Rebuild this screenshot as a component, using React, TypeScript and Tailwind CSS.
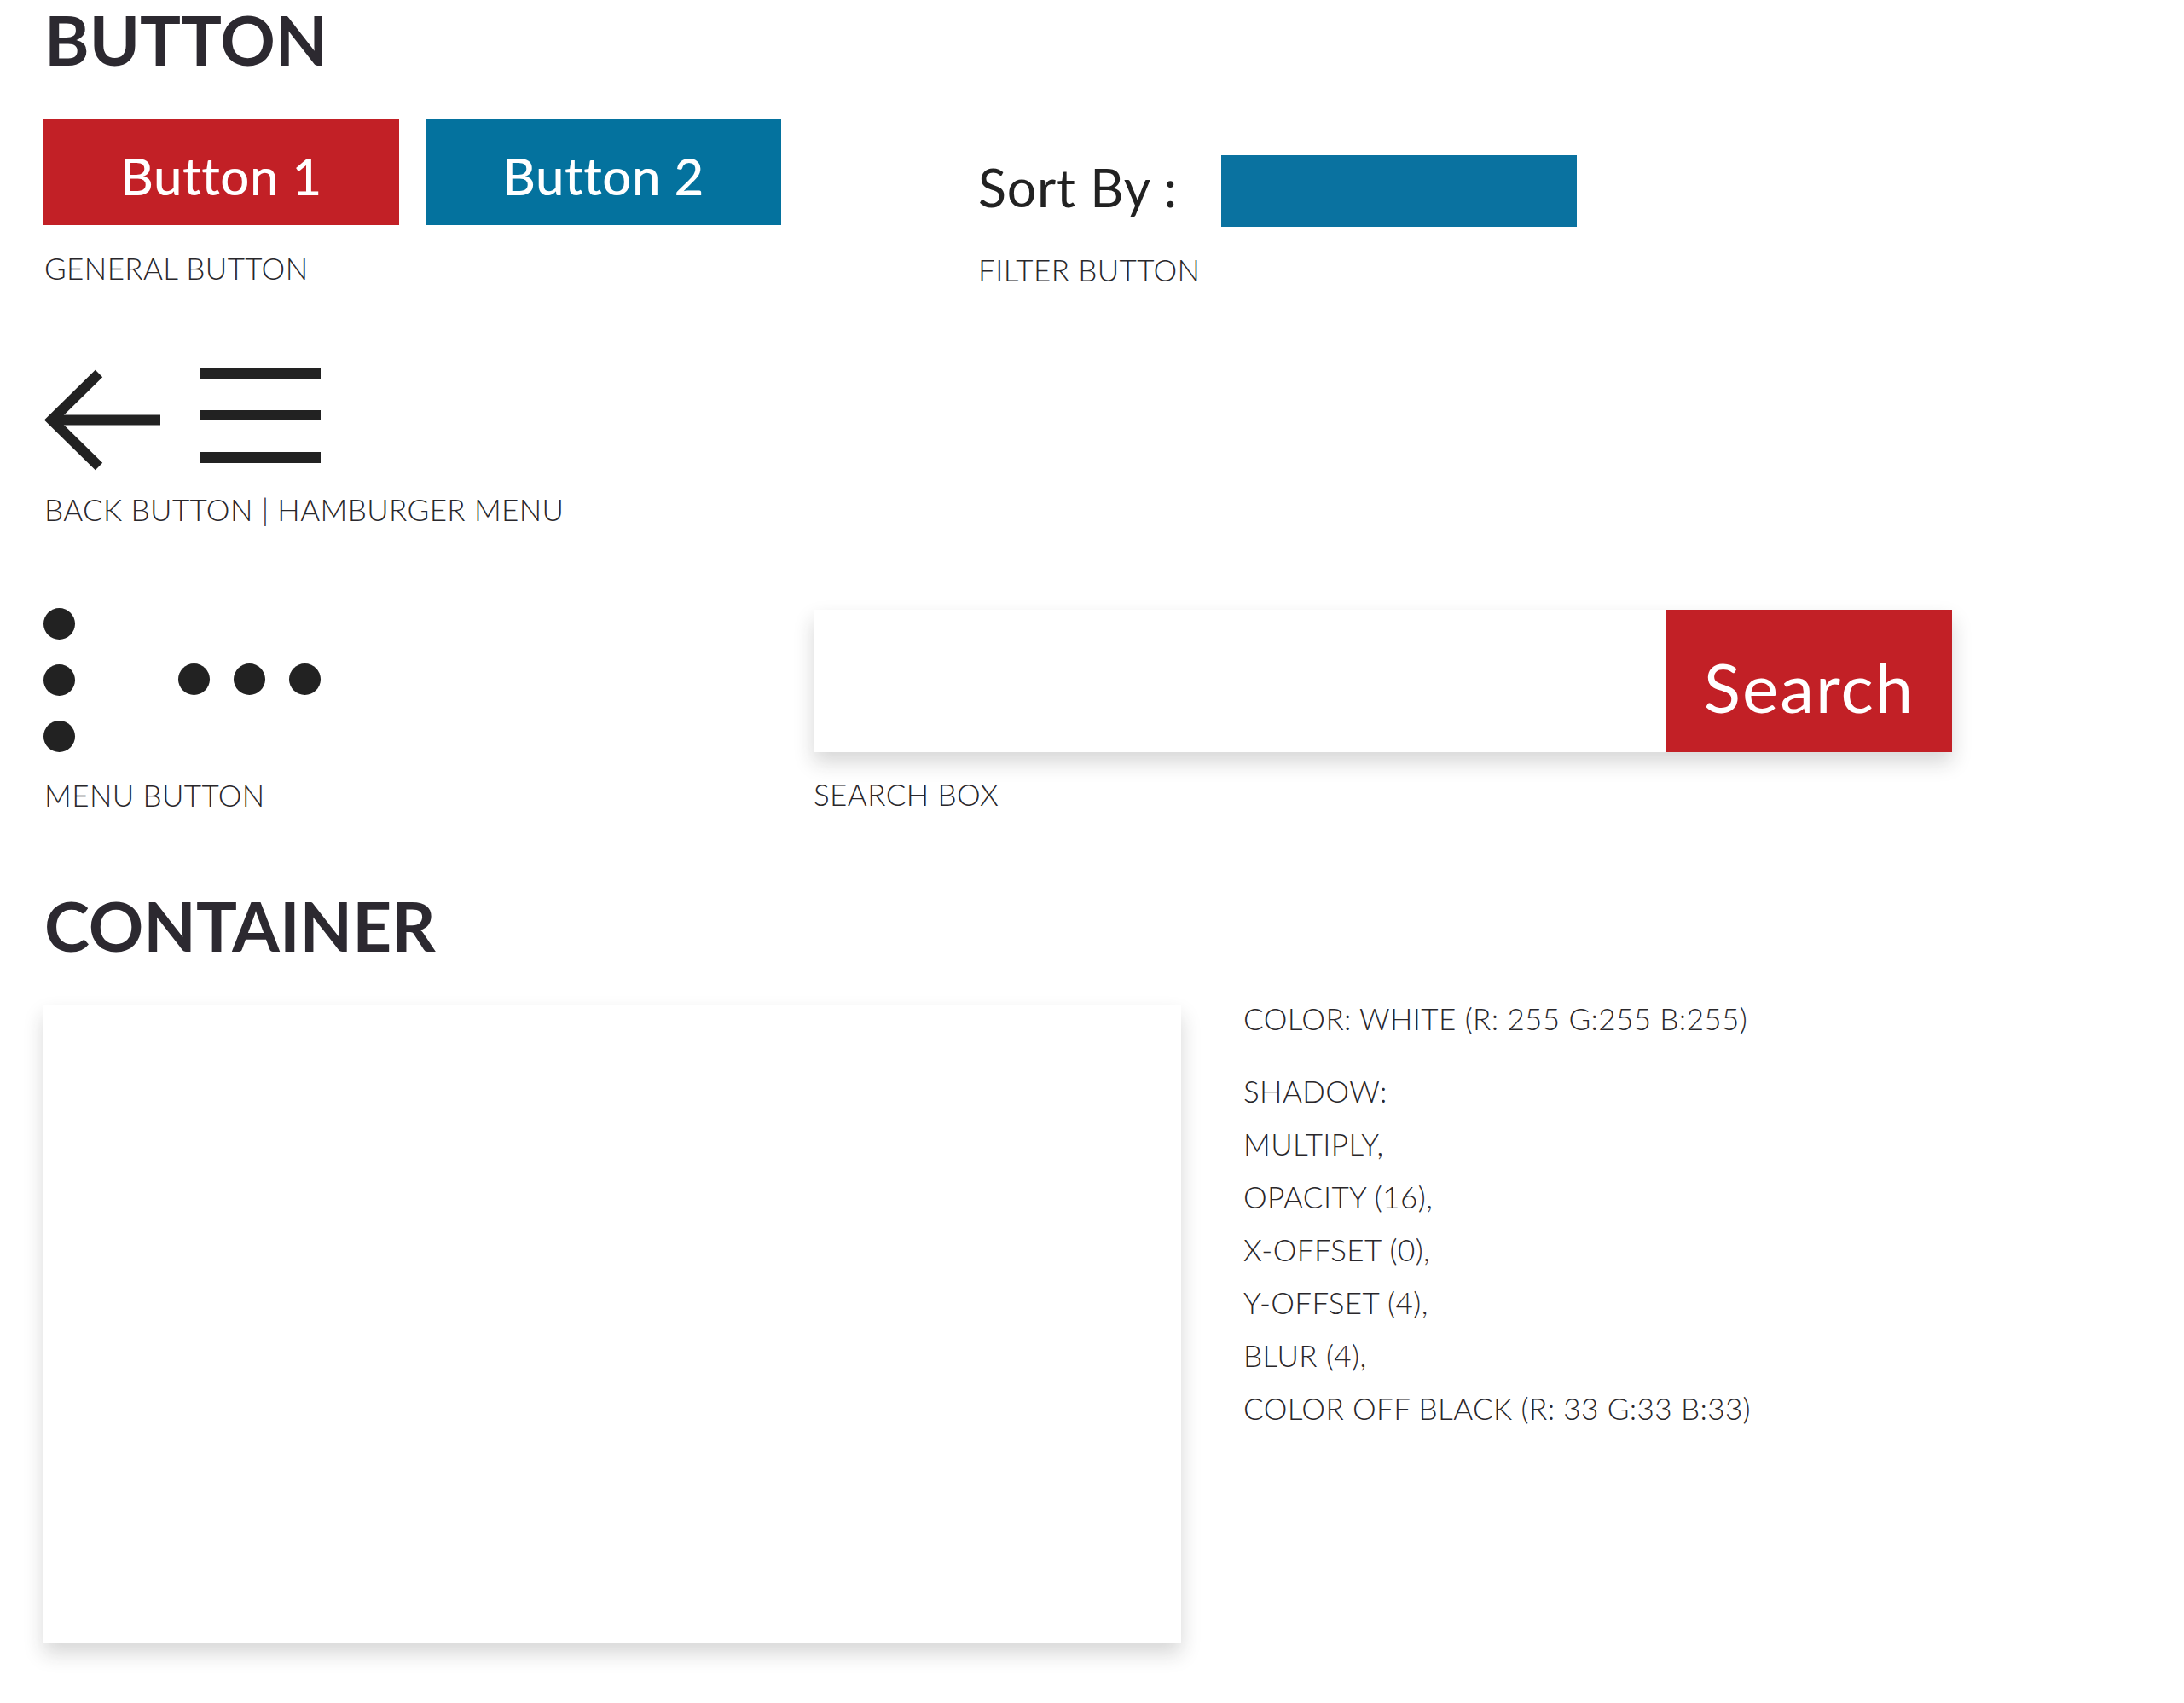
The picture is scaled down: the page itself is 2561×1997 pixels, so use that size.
import React from "react";

const label =
  "text-[35px] leading-none font-light text-[#29272b] tracking-[0.4px] whitespace-nowrap";

function BackArrow() {
  return (
    <svg width="136" height="121" viewBox="0 0 136 121" className="overflow-visible block">
      <polyline
        points="64,6 8.5,60.5 64,115"
        fill="none"
        stroke="#222222"
        strokeWidth="12"
        strokeLinejoin="miter"
        strokeMiterlimit="4"
      />
      <line x1="10" y1="60.5" x2="136" y2="60.5" stroke="#222222" strokeWidth="12" />
    </svg>
  );
}

function Hamburger() {
  return (
    <svg width="141" height="111" viewBox="0 0 141 111" className="block">
      <rect x="0" y="0" width="141" height="12" fill="#222222" />
      <rect x="0" y="49" width="141" height="12" fill="#222222" />
      <rect x="0" y="98" width="141" height="13" fill="#222222" />
    </svg>
  );
}

function Dot() {
  return <div className="w-[37px] h-[37px] rounded-full bg-[#222222]" />;
}

export default function App() {
  return (
    <div className="min-h-screen bg-white pl-[52px] pt-[6px] font-['Lato',sans-serif] text-[#29272b]">
      {/* BUTTON heading */}
      <h1 className="text-[80px] leading-none font-bold text-[#2c2930]">BUTTON</h1>

      {/* Buttons row */}
      <div className="flex mt-[53px]">
        <div className="w-[1095px] flex flex-col">
          <div className="flex gap-[31px] -ml-px">
            <div className="w-[417px] h-[125px] bg-[#c22026] flex items-center justify-center text-white text-[60px] leading-none font-medium tracking-[0.5px] pt-[8px]">
              Button 1
            </div>
            <div className="w-[417px] h-[125px] bg-[#04729e] flex items-center justify-center text-white text-[60px] leading-none font-medium tracking-[0.5px] pt-[8px]">
              Button 2
            </div>
          </div>
          <div className={label + " mt-[33px]"}>GENERAL BUTTON</div>
        </div>
        <div className="flex flex-col">
          <div className="flex items-start mt-[43px]">
            <div className="text-[61px] leading-none text-[#222222] mt-[7px] w-[285px] tracking-[0.8px] whitespace-pre">Sort By :</div>
            <div className="w-[417px] h-[84px] bg-[#0a72a0]" />
          </div>
          <div className={label + " mt-[33px]"}>FILTER BUTTON</div>
        </div>
      </div>

      {/* Back / hamburger */}
      <div className="flex items-start mt-[98px]">
        <BackArrow />
        <div className="ml-[47px]">
          <Hamburger />
        </div>
      </div>
      <div className={label + " mt-[27px]"}>BACK BUTTON | HAMBURGER MENU</div>

      {/* Menu + search */}
      <div className="flex mt-[98px]">
        <div className="w-[902px] flex flex-col">
          <div className="flex items-center -ml-px">
            <div className="flex flex-col gap-[29px]">
              <Dot />
              <Dot />
              <Dot />
            </div>
            <div className="flex gap-[28px] ml-[121px] mt-[-2px]">
              <Dot />
              <Dot />
              <Dot />
            </div>
          </div>
          <div className={label + " mt-[33px]"}>MENU BUTTON</div>
        </div>
        <div className="flex flex-col">
          <div className="mt-[2px] w-[1335px] h-[167px] bg-white flex shadow-[0_12px_22px_rgba(33,33,33,0.18)]">
            <div className="flex-1" />
            <div className="w-[335px] h-full bg-[#c22026] flex items-center justify-center text-white text-[80px] leading-none tracking-[2px] pt-[12px]">
              Search
            </div>
          </div>
          <div className={label + " mt-[32px]"}>SEARCH BOX</div>
        </div>
      </div>

      {/* CONTAINER */}
      <h2 className="text-[80px] leading-none font-bold text-[#2c2930] mt-[95px]">CONTAINER</h2>
      <div className="flex mt-[54px] pb-[70px]">
        <div className="w-[1334px] h-[748px] bg-white -ml-px shadow-[0_12px_22px_rgba(33,33,33,0.18)]" />
        <div className="ml-[73px] mt-[-2px] flex flex-col">
          <div className={label}>COLOR: WHITE (R: 255 G:255 B:255)</div>
          <div className="flex flex-col gap-[27px] mt-[50px]">
            <div className={label}>SHADOW:</div>
            <div className={label}>MULTIPLY,</div>
            <div className={label}>OPACITY (16),</div>
            <div className={label}>X-OFFSET (0),</div>
            <div className={label}>Y-OFFSET (4),</div>
            <div className={label}>BLUR (4),</div>
            <div className={label}>COLOR OFF BLACK (R: 33 G:33 B:33)</div>
          </div>
        </div>
      </div>
    </div>
  );
}
